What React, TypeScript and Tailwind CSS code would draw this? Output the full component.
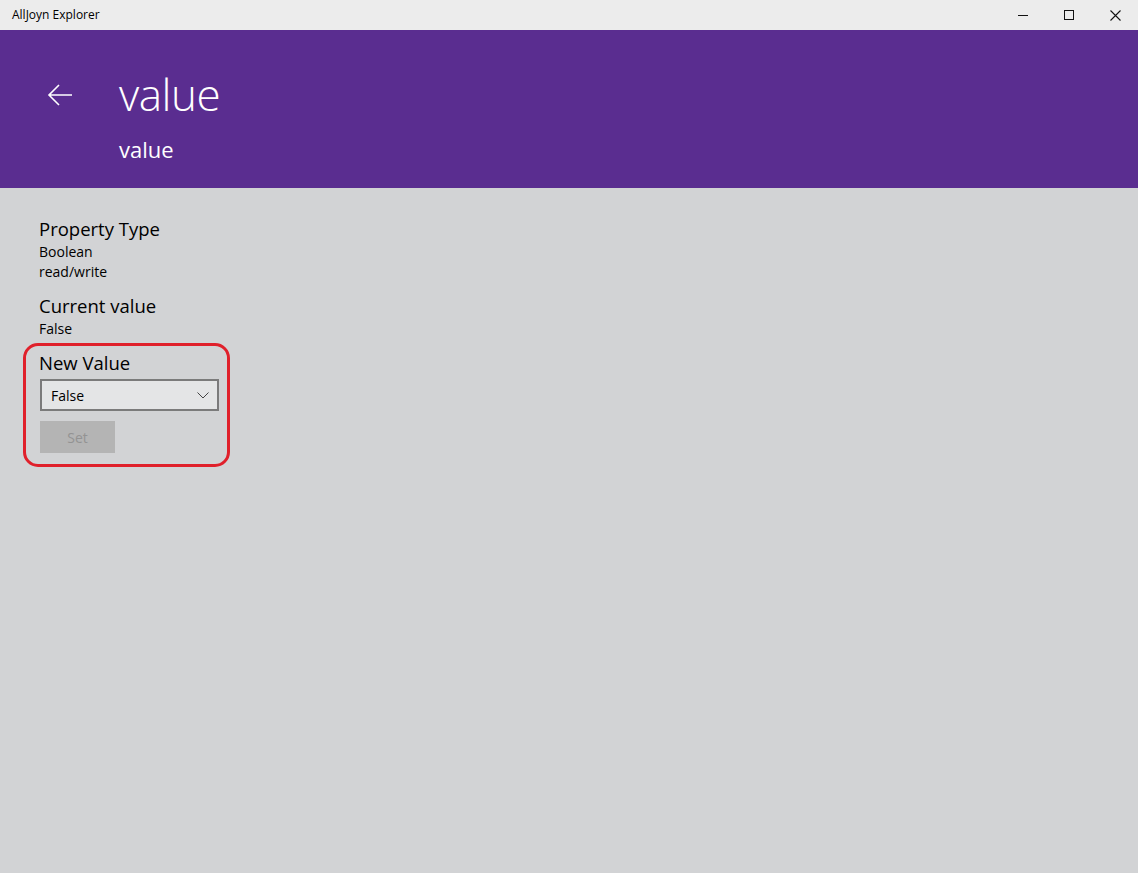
import React from "react";

export default function App() {
  const font = { fontFamily: '"Open Sans", "Noto Sans", sans-serif' };
  return (
    <div className="w-[1138px] h-[873px] flex flex-col bg-[#d2d3d5] overflow-hidden" style={font}>
      {/* title bar */}
      <div className="h-[30px] bg-[#ececec] flex items-center shrink-0">
        <div className="pl-[12px] text-[12px] text-black flex-1">AllJoyn Explorer</div>
        <div className="flex h-full">
          <div className="w-[46px] h-full flex items-center justify-center">
            <svg width="10" height="10" viewBox="0 0 10 10"><path d="M0 5.5H10" stroke="#111" strokeWidth="1" /></svg>
          </div>
          <div className="w-[46px] h-full flex items-center justify-center">
            <svg width="10" height="10" viewBox="0 0 10 10"><rect x="0.5" y="0.5" width="9" height="9" fill="none" stroke="#111" strokeWidth="1" /></svg>
          </div>
          <div className="w-[46px] h-full flex items-center justify-center">
            <svg width="11" height="11" viewBox="0 0 11 11"><path d="M0.5 0.5L10.5 10.5M10.5 0.5L0.5 10.5" stroke="#111" strokeWidth="1.1" /></svg>
          </div>
        </div>
      </div>
      {/* header */}
      <div className="h-[158px] bg-[#5a2d90] shrink-0 flex">
        <div className="w-[119px] pt-[54px] pl-[47px]">
          <svg width="26" height="22" viewBox="0 0 26 22">
            <path d="M25 11H2M12 1L2 11L12 21" fill="none" stroke="#ffffff" strokeWidth="1.6" />
          </svg>
        </div>
        <div className="flex flex-col text-white">
          <div className="text-[44px] font-light leading-none mt-[42px] tracking-[-0.5px]">value</div>
          <div className="text-[22px] leading-none mt-[22px]">value</div>
        </div>
      </div>
      {/* content */}
      <div className="pl-[39px] pt-[28px] flex flex-col text-black">
        <div className="text-[18.5px] leading-[26px]">Property Type</div>
        <div className="text-[14px] leading-[20px]">Boolean</div>
        <div className="text-[14px] leading-[20px]">read/write</div>
        <div className="text-[18.5px] leading-[26px] mt-[11px]">Current value</div>
        <div className="text-[14px] leading-[20px]">False</div>
        <div className="relative">
          <div className="absolute left-[-16px] top-[4px] w-[207px] h-[124px] border-[3px] border-[#e0202b] rounded-[15px]" />
          <div className="text-[18.5px] leading-[26px] mt-[11px]">New Value</div>
          <div className="ml-[1px] mt-[3px] w-[179px] h-[32px] border-2 border-[#7b7b7b] bg-[#e4e5e6] flex items-center justify-between pl-[9px] pr-[8px]">
            <span className="text-[14px]">False</span>
            <svg width="12" height="7" viewBox="0 0 12 7"><path d="M0.5 0.5L6 6L11.5 0.5" fill="none" stroke="#444" strokeWidth="1" /></svg>
          </div>
          <div className="ml-[1px] mt-[10px] w-[75px] h-[32px] bg-[#b4b4b4] flex items-center justify-center text-[14px] text-[#939393]">Set</div>
        </div>
      </div>
    </div>
  );
}
